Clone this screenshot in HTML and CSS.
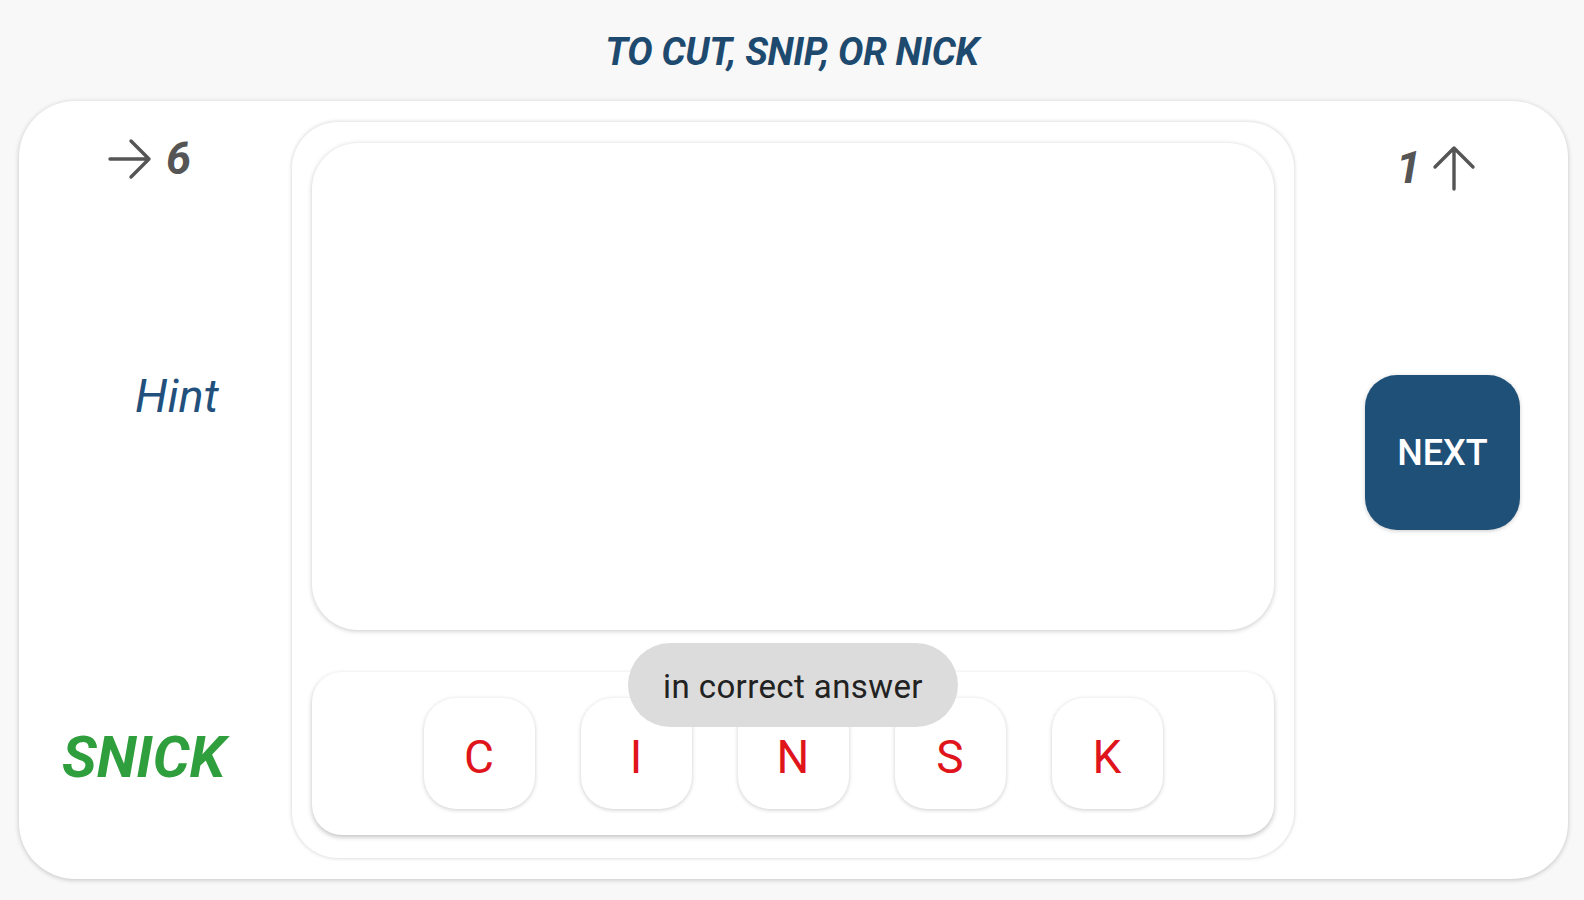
FILE: index.html
```html
<!DOCTYPE html>
<html lang="en">
<head>
<meta charset="utf-8">
<title>Snick</title>
<link rel="stylesheet" href="styles.css">
</head>
<body>
<header class="title-bar">
  <h1 class="title">TO CUT, SNIP, OR NICK</h1>
</header>
<main class="card">
  <section class="side side-left">
    <div class="counter counter-left">
      <svg class="arrow" width="44" height="42" viewBox="0 0 44 42" aria-hidden="true"><path d="M2 21H41M23 3L41 21L23 39" fill="none" stroke="#555" stroke-width="3.4" stroke-linecap="round" stroke-linejoin="round"/></svg>
      <span class="count">6</span>
    </div>
    <div class="hint">Hint</div>
    <div class="answer">SNICK</div>
  </section>
  <section class="board">
    <div class="screen"></div>
    <div class="tray">
      <div class="tile">C</div>
      <div class="tile">I</div>
      <div class="tile">N</div>
      <div class="tile">S</div>
      <div class="tile">K</div>
      <div class="tooltip">in correct answer</div>
    </div>
  </section>
  <section class="side side-right">
    <div class="counter counter-right">
      <span class="count">1</span>
      <svg class="arrow" width="44" height="46" viewBox="0 0 44 46" aria-hidden="true"><path d="M22 44V3M3 22L22 3L41 22" fill="none" stroke="#555" stroke-width="3.4" stroke-linecap="round" stroke-linejoin="round"/></svg>
    </div>
    <button class="next">NEXT</button>
  </section>
</main>
</body>
</html>
```

FILE: styles.css
```css
* { box-sizing: border-box; }

html, body {
  margin: 0;
  padding: 0;
}

body {
  width: 1584px;
  height: 900px;
  background: #f8f8f8;
  font-family: Roboto, "Noto Sans", "Liberation Sans", sans-serif;
  overflow: hidden;
}

.title-bar {
  height: 101px;
  display: flex;
  justify-content: center;
  padding-top: 30px;
}

.title {
  margin: 0;
  font-size: 38px;
  line-height: 44px;
  font-weight: 700;
  font-style: italic;
  color: #1d4a6e;
  letter-spacing: -0.3px;
  white-space: nowrap;
  height: 44px;
}

.card {
  margin-left: 19px;
  width: 1549px;
  height: 778px;
  background: #fff;
  border-radius: 56px;
  box-shadow: 0 1px 5px rgba(0, 0, 0, 0.22);
  display: flex;
}

.side {
  width: 273px;
  flex: none;
  display: flex;
  flex-direction: column;
}

.counter {
  display: flex;
  align-items: center;
  color: #555;
  font-weight: 700;
  font-style: italic;
  font-size: 45px;
  line-height: 46px;
}

.counter-left {
  margin-top: 35px;
  padding-left: 89px;
  gap: 14px;
}

.counter-right {
  margin-top: 44px;
  padding-left: 102px;
  gap: 11px;
}

.hint {
  margin-top: 187px;
  padding-left: 116px;
  font-size: 47px;
  line-height: 54px;
  font-style: italic;
  color: #22507d;
}

.answer {
  margin-top: 302px;
  padding-left: 43px;
  font-size: 58px;
  line-height: 64px;
  font-weight: 700;
  font-style: italic;
  color: #2f9e3d;
}

.board {
  width: 1002px;
  flex: none;
  margin: 21px 0;
  padding: 21px 20px 21px 20px;
  border-radius: 46px;
  box-shadow: 0 0 4px rgba(0, 0, 0, 0.2);
  display: flex;
  flex-direction: column;
}

.screen {
  height: 487px;
  border-radius: 46px;
  background: #fff;
  box-shadow: 0 1px 5px rgba(0, 0, 0, 0.22);
}

.tray {
  position: relative;
  margin-top: 42px;
  height: 163px;
  border-radius: 30px;
  background: #fff;
  box-shadow: 0 2px 5px rgba(0, 0, 0, 0.25);
  display: flex;
  justify-content: center;
  align-items: center;
  gap: 46px;
}

.tile {
  width: 111px;
  height: 111px;
  border-radius: 32px;
  background: #fff;
  box-shadow: 0 1px 4px rgba(0, 0, 0, 0.2);
  display: flex;
  align-items: center;
  justify-content: center;
  color: #e0141b;
  font-size: 46px;
  padding-top: 6px;
}

.tooltip {
  position: absolute;
  top: -29px;
  left: 50%;
  transform: translateX(-50%);
  width: 330px;
  height: 84px;
  border-radius: 42px;
  background: #dcdcdc;
  color: #222;
  font-size: 33px;
  letter-spacing: 0.4px;
  display: flex;
  align-items: center;
  justify-content: center;
  padding-top: 2px;
}

.side-right {
  align-items: stretch;
}

.next {
  margin-top: 184px;
  margin-left: 71px;
  width: 155px;
  height: 155px;
  border: none;
  border-radius: 32px;
  background: #1f5078;
  color: #fff;
  font-family: Roboto, "Noto Sans", "Liberation Sans", sans-serif;
  font-size: 36px;
  font-weight: 500;
  box-shadow: 0 1px 4px rgba(0, 0, 0, 0.2);
  padding: 0;
}
```
